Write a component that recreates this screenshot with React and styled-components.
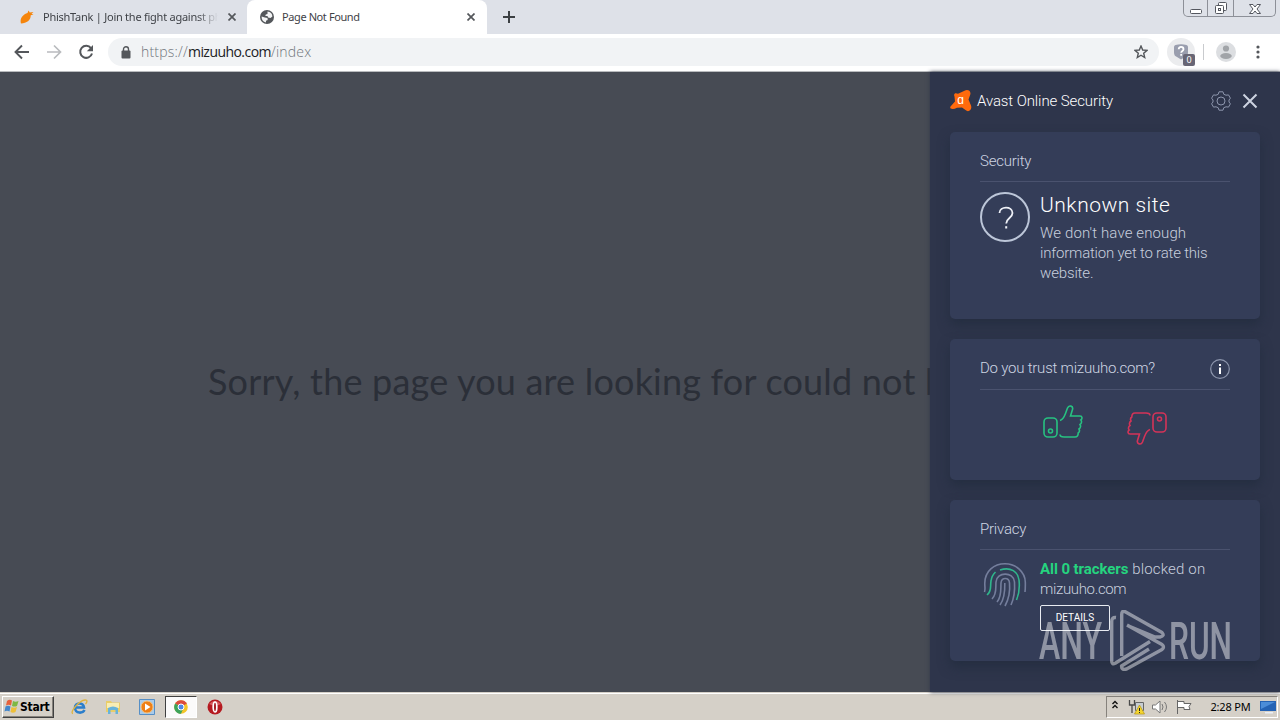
import React from "react";
import styled, { createGlobalStyle } from "styled-components";

const App = () => {
    return (
        <Desktop>
            <GlobalStyle />
            <TabStrip>
                <Tab>
                    <FishIcon />
                    <TabTitle $fade>PhishTank | Join the fight against phishing</TabTitle>
                    <CloseIcon />
                </Tab>
                <Tab $active>
                    <GlobeIcon />
                    <TabTitle>Page Not Found</TabTitle>
                    <CloseIcon />
                </Tab>
                <NewTab>
                    <svg width="12" height="12" viewBox="0 0 12 12">
                        <path d="M6 0v12M0 6h12" stroke="#3c4043" strokeWidth="2" />
                    </svg>
                </NewTab>
                <WindowButtons>
                    <WindowButton $width={23}>
                        <svg width="23" height="16" viewBox="0 0 23 16">
                            <rect x="6.500" y="8.500" width="11" height="4" rx="1" fill="#fff" stroke="#54575f" />
                        </svg>
                    </WindowButton>
                    <WindowButton $width={25}>
                        <svg width="25" height="16" viewBox="0 0 25 16">
                            <rect x="10.500" y="1.500" width="8" height="8" rx="1" fill="#fff" stroke="#54575f" />
                            <rect x="7.500" y="4.500" width="8" height="8" rx="1" fill="#fff" stroke="#54575f" />
                            <rect x="10.500" y="7.500" width="2" height="2" fill="#fff" stroke="#54575f" />
                        </svg>
                    </WindowButton>
                    <WindowButton $width={41}>
                        <svg width="41" height="16" viewBox="0 0 41 16">
                            <path d="M15.500 3.500h3.500l2 2.500 2-2.500h3.500l-3.500 4.500 3.500 4.500H23l-2-2.500-2 2.500h-3.500L19 8z" fill="#fff" stroke="#54575f" />
                        </svg>
                    </WindowButton>
                </WindowButtons>
            </TabStrip>
            <Toolbar>
                <NavIcons>
                    <svg width="16" height="16" viewBox="0 0 16 16">
                        <path d="M15 8H2M8 1.500L1.500 8 8 14.500" fill="none" stroke="#54575b" strokeWidth="1.900" />
                    </svg>
                    <svg width="16" height="16" viewBox="0 0 16 16">
                        <path d="M1 8h13M8 1.500L14.500 8 8 14.500" fill="none" stroke="#b9bbbe" strokeWidth="1.700" />
                    </svg>
                    <svg width="16" height="16" viewBox="0 0 16 16">
                        <path d="M13 4.200A6 6 0 1 0 14 9.500" fill="none" stroke="#54575b" strokeWidth="2" />
                        <path d="M15 1v6.200H8.800z" fill="#54575b" />
                    </svg>
                </NavIcons>
                <AddressBar>
                    <svg width="10" height="13" viewBox="0 0 10 13">
                        <path d="M2.500 6V3.200a2.500 2.500 0 0 1 5 0V6" fill="none" stroke="#54575b" strokeWidth="1.400" />
                        <rect x="0.500" y="4.500" width="9" height="8" rx="1" fill="#54575b" />
                    </svg>
                    <Url>
                        https://<strong>mizuuho.com</strong>/index
                    </Url>
                    <svg width="14" height="14" viewBox="0 0 14 14">
                        <path d="M7 1l1.700 4 4.300.4-3.300 2.800 1 4.300L7 10.200l-3.700 2.300 1-4.300L1 5.400 5.300 5z" fill="none" stroke="#54575b" strokeWidth="1.400" />
                    </svg>
                </AddressBar>
                <ExtensionButton>
                    <svg width="14" height="16" viewBox="0 0 14 16">
                        <path d="M1.500 1Q7-.3 12.500 1q1.500.3 1.500 2v5.500q0 3.500-3 4.500L7 15.500 3 13Q0 12 0 8.500V3q0-1.700 1.500-2z" fill="#9a9eae" />
                        <path d="M4.700 5.300c0-3.300 4.800-3 4.800 0C9.500 7 7.200 7 7.200 8.800M7.200 10v1.800" fill="none" stroke="#fff" strokeWidth="1.800" />
                    </svg>
                    <ExtensionBadge>0</ExtensionBadge>
                </ExtensionButton>
                <ToolbarDivider />
                <Avatar>
                    <svg width="20" height="20" viewBox="0 0 20 20">
                        <circle cx="10" cy="10" r="10" fill="#dcdee1" />
                        <circle cx="10" cy="6.500" r="3.100" fill="#a1a4a8" />
                        <ellipse cx="10" cy="14" rx="5.800" ry="2.900" fill="#a1a4a8" />
                    </svg>
                </Avatar>
                <svg width="4" height="14" viewBox="0 0 4 14" fill="#54575b">
                    <circle cx="2" cy="2" r="1.600" />
                    <circle cx="2" cy="7" r="1.600" />
                    <circle cx="2" cy="12" r="1.600" />
                </svg>
            </Toolbar>
            <Main>
                <PageBody>
                    <NotFound>Sorry, the page you are looking for could not be found.</NotFound>
                </PageBody>
                <Panel>
                    <PanelHeader>
                        <AvastLogo />
                        <PanelTitle>Avast Online Security</PanelTitle>
                        <GearIcon />
                        <svg width="16" height="16" viewBox="0 0 16 16">
                            <path d="M1.500 1.500l13 13M14.500 1.500l-13 13" stroke="#cdd3e0" strokeWidth="2" />
                        </svg>
                    </PanelHeader>
                    <Card $height={187}>
                        <CardTitle>
                            <CardLabel>Security</CardLabel>
                        </CardTitle>
                        <CardRow $top={10}>
                            <svg width="50" height="50" viewBox="0 0 50 50" fill="none">
                                <circle cx="25" cy="25" r="24" stroke="#bcc6d8" strokeWidth="2" />
                                <path d="M19.500 21c0-7 13-7.500 13 0 0 5-6.300 5-6.300 10.500" stroke="#eef1f7" strokeWidth="1.800" />
                                <path d="M25.200 34.200h2v2.300h-2z" fill="#eef1f7" />
                            </svg>
                            <div>
                                <SiteStatus>Unknown site</SiteStatus>
                                <Text $spacing="0.12px">We don't have enough</Text>
                                <Text $spacing="-0.2px">information yet to rate this</Text>
                                <Text $spacing="-0.15px">website.</Text>
                            </div>
                        </CardRow>
                    </Card>
                    <Card $height={141}>
                        <CardTitle $height={50}>
                            <CardLabel>Do you trust mizuuho.com?</CardLabel>
                            <svg width="20" height="20" viewBox="0 0 20 20">
                                <circle cx="10" cy="10" r="9.300" fill="none" stroke="#8d96ad" strokeWidth="1.200" />
                                <path d="M9 5h2v2H9zM9 8.500h2V15H9z" fill="#fff" />
                            </svg>
                        </CardTitle>
                        <VoteRow>
                            <ThumbIcon color="#27c281" />
                            <FlippedThumb color="#d43358" />
                        </VoteRow>
                    </Card>
                    <Card $height={161}>
                        <CardTitle>
                            <CardLabel>Privacy</CardLabel>
                        </CardTitle>
                        <CardRow $top={9}>
                            <FingerprintIcon />
                            <div>
                                <Text $spacing="0.18px">
                                    <strong>All 0 trackers</strong> blocked on
                                </Text>
                                <Text $spacing="-0.35px">mizuuho.com</Text>
                                <DetailsButton>DETAILS</DetailsButton>
                            </div>
                        </CardRow>
                    </Card>
                </Panel>
                <Watermark />
            </Main>
            <Taskbar>
                <StartButton>
                    <WindowsFlag />
                    Start
                </StartButton>
                <Launchers>
                    <Launcher><ExplorerIcon /></Launcher>
                    <Launcher><FolderIcon /></Launcher>
                    <Launcher><PlayerIcon /></Launcher>
                    <Launcher $active><ChromeIcon /></Launcher>
                    <Launcher><OperaIcon /></Launcher>
                </Launchers>
                <Tray>
                    <TrayIcons />
                    <Clock>2:28 PM</Clock>
                    <svg width="16" height="14" viewBox="0 0 16 14">
                        <path d="M0 1h16v10H0z" fill="#2563b4" />
                        <path d="M1 2h14L1 9z" fill="#4c8dd8" />
                        <path d="M5 12h8v1.500H5z" fill="#e8eef7" />
                    </svg>
                </Tray>
            </Taskbar>
        </Desktop>
    );
};

export default App;

const FishIcon = () => (
    <svg width="14" height="14" viewBox="0 0 14 14">
        <path d="M1 13.500C-.5 9 2.500 4.500 7.500 3L8.500.5l1.300 2L13.500 2l-2 1.700 2 .8-2.800.8C11 9.500 7 13.500 1 13.500z" fill="#f5850c" />
    </svg>
);

const GlobeIcon = () => (
    <svg width="14" height="14" viewBox="0 0 14 14">
        <circle cx="7" cy="7" r="7" fill="#54575b" />
        <path d="M7.500 1.600C10.500 1.800 12.300 4 12.400 6.500L10.500 8 8 7.500 7.500 6H5.300l.5-1.500L7.500 4zM1.600 6.500l3.200 1L7.500 8l.2 2-1.700.8v1.600C3 12 1.500 9.500 1.600 6.500z" fill="#f3f4f5" />
    </svg>
);

const CloseIcon = () => (
    <svg width="8" height="8" viewBox="0 0 8 8">
        <path d="M.5.5l7 7M7.500.5l-7 7" stroke="#54575b" strokeWidth="1.700" />
    </svg>
);

const AvastLogo = () => (
    <svg width="22" height="22" viewBox="0 0 22 22">
        <path d="M4.500 6.500C3.200 3.500 5.500 2.600 8 3.800L14.500.8C17.500-1 21.300.8 20.300 4.500L18.500 9.500l2.500 6c1.500 4-2.500 7.500-5.500 4.500L12 17.500l-5 .2c-3.500 2-8 1.500-6.500-1.200L5 11.500z" fill="#ff6a0d" />
        <text x="10.700" y="14" textAnchor="middle" fill="#fff" fontFamily="Roboto, sans-serif" fontSize="12">ɑ</text>
    </svg>
);

const GearIcon = () => (
    <svg width="20" height="20" viewBox="0 0 20 20" fill="none" stroke="#8d96ad" strokeWidth="1">
        <circle cx="10" cy="10" r="4" />
        <path d="M8 .8h4l.8 2.500L15 4.200l2.500-.3 1.900 3.300L18 9v2l1.400 1.800-1.900 3.300-2.500-.3-2.200.9-.8 2.500H8l-.8-2.500-2.200-.9-2.500.3-1.900-3.300L2 11V9L.6 7.200l1.900-3.300 2.500.3 2.200-.9z" strokeLinejoin="round" />
    </svg>
);

const ThumbIcon = ({ className, color }) => (
    <svg className={className} width="40" height="34" viewBox="0 0 40 34" fill="none" stroke={color} strokeWidth="1.600">
        <rect x="1" y="13" width="13" height="19" rx="4" />
        <circle cx="7.500" cy="26" r="2" />
        <path d="M17 15.500c3-1 4-3 5.500-7l2-5.500c1.500-3.500 6-2 5 1.500L27.500 11H37c2.500 0 2.500 3 .8 4 1.200 1 .9 3.500-.8 4.500 1 1.500.6 3.500-1 4.500.8 1.500.5 3-.8 4 0 2.500-1 4-3.200 4H21c-2.500 0-4-.5-4-2.500" />
    </svg>
);

const FingerprintIcon = () => (
    <svg width="50" height="50" viewBox="0 0 50 50" fill="none" stroke="#747e9c" strokeWidth="1.600">
        <path d="M4.500 33c1-3 .2-5 .3-9C5 12 14 4.800 25 4.800S45 13 45.300 23c.1 4 0 7-.3 10" />
        <path d="M7 36c5-4 3-8 4-14 .5-3.500 1.700-6.500 4.500-9M20 11c11-3.500 18 2 19 10 .8 7 0 14-2.500 20" stroke="#30b68c" />
        <path d="M12 40c5-5 3.500-11 4-17 .5-10 17.500-11 18.500 0 .5 8-.3 16-3.500 23" />
        <path d="M17 43c5-6 3.500-13 4-19 .5-6 8-6 8.500 0 .7 8-.6 16-4.500 23" />
        <path d="M20 46c4.500-6 5-13 4.800-22" />
    </svg>
);

const Watermark = () => (
    <WatermarkSvg width="194" height="62" viewBox="0 0 194 62">
        <g fill="#fff" fontFamily="Roboto, 'Liberation Sans', sans-serif" fontSize="51" fontWeight="500">
            <text x="0" y="49" textLength="63" lengthAdjust="spacingAndGlyphs">ANY</text>
            <text x="130" y="49" textLength="63" lengthAdjust="spacingAndGlyphs">RUN</text>
        </g>
        <path d="M77 7.500q-4.300-.5-4.300 4V51q0 4 3.500 2.300L111 31.500M82.700 46V4.500q0-4.500 3.500-2.800L123 22.500q3 3.500-2 4.500h-5L88.500 15.500M88 15l35 19.500q3 2.500 0 5L87.500 59q-5 1.500-5-3L110 39" fill="none" stroke="#fff" strokeWidth="3.400" strokeLinejoin="round" />
    </WatermarkSvg>
);

const WindowsFlag = () => (
    <svg width="15" height="15" viewBox="0 0 15 15">
        <path d="M3 2q2.500-2 5-.5L7 6.500Q4.500 5 2 6.500z" fill="#e6613c" />
        <path d="M9 2q2.500 1.500 5.500 0L13 7q-2.500 1-5 0z" fill="#7eb844" />
        <path d="M1.500 7.500q2.500-1.500 5 0l-1 5q-2.500-1.500-5 0z" fill="#4386cb" />
        <path d="M7.500 8q2.500 1.500 5.500 0l-1.500 5q-2.500 1.500-5 0z" fill="#eebf39" />
    </svg>
);

const ExplorerIcon = () => (
    <svg width="17" height="16" viewBox="0 0 17 16" fill="none">
        <path d="M13.500 11c-1.800 3.500-9 4-9.500-2S12.500 3 13 8.500H5" stroke="#2b7ecb" strokeWidth="2.600" />
        <path d="M2 14.500C-2 14 8 1.500 14 1c3-.2 2 2.500.5 4" stroke="#dfb33f" strokeWidth="1.300" />
    </svg>
);

const FolderIcon = () => (
    <svg width="16" height="16" viewBox="0 0 16 16">
        <path d="M1 2h5l1 1.500h8V13H1z" fill="#e9cd69" />
        <path d="M2 4h12v5H2z" fill="#f8edb4" />
        <path d="M3 15V9q5-3 10 0v6h-2.500v-4h-5v4z" fill="#68b3da" />
    </svg>
);

const PlayerIcon = () => (
    <svg width="16" height="16" viewBox="0 0 16 16">
        <path d="M.5.5h15v15H.5z" fill="#a9cbea" stroke="#568fc6" />
        <circle cx="8" cy="8" r="6" fill="#ee7f16" stroke="#f7c078" />
        <path d="M6 4.500L11.500 8 6 11.500z" fill="#fff" />
    </svg>
);

const ChromeIcon = () => (
    <svg width="14" height="14" viewBox="0 0 14 14">
        <circle cx="7" cy="7" r="6.800" fill="#f4c529" />
        <path d="M7 7L1.100 3.600a6.800 6.800 0 0 1 11.800 0z" fill="#dc4b3e" />
        <path d="M7 7L1.100 3.600A6.800 6.800 0 0 0 7 13.800L9 9z" fill="#3da35a" />
        <circle cx="7" cy="7" r="3" fill="#4f88e6" stroke="#fff" />
    </svg>
);

const OperaIcon = () => (
    <svg width="16" height="16" viewBox="0 0 16 16">
        <circle cx="8" cy="8" r="7.500" fill="#b51a20" />
        <path d="M2 5q6-6 12 0-6 3-12 0z" fill="#d65a5d" />
        <ellipse cx="8" cy="8" rx="1.800" ry="5" fill="#a01218" stroke="#fff" strokeWidth="1.700" />
    </svg>
);

const TrayIcons = () => (
    <svg width="86" height="18" viewBox="0 0 86 18" fill="none">
        <path d="M1.500 6L4 3.500 6.500 6M1.500 10L4 7.500 6.500 10" stroke="#111" strokeWidth="1.400" />
        <path d="M18.500 2v5h5V2M21 7v8" stroke="#4a4a4a" strokeWidth="1.300" />
        <path d="M24.500 4.500h8v8h-8z" fill="#c7cdd3" stroke="#666" />
        <path d="M28.500 7l5 9h-10z" fill="#f4d52e" stroke="#b69514" strokeWidth=".7" />
        <path d="M28.500 10v3M28.500 14v1" stroke="#222" />
        <path d="M41.500 7h3L49 3v12l-4.500-4h-3z" fill="#fff" stroke="#777" />
        <path d="M51 6q2 3 0 6M53.500 4q4 5 0 10" stroke="#777" />
        <path d="M66.500 2v14M67 3.500h6v2h7l-2 3 1 3h-6v-2h-6" fill="#fff" stroke="#666" />
    </svg>
);

const GlobalStyle = createGlobalStyle`
  body {
    margin: 0;
    overflow: hidden;
  }
`;

const Desktop = styled.div`
  width: 1280px;
  height: 720px;
  display: flex;
  flex-direction: column;
  overflow: hidden;
  font-family: "Noto Sans", "Open Sans", sans-serif;
`;

const TabStrip = styled.div`
  height: 34px;
  display: flex;
  background-color: #dee1e8;
`;

const Tab = styled.div`
  box-sizing: border-box;
  width: ${(props) => (props.$active ? 240 : 247)}px;
  padding: 0 ${(props) => (props.$active ? "12px 0 13px" : "11px 0 20px")};
  display: flex;
  align-items: center;
  background-color: ${(props) => (props.$active ? "#fff" : "transparent")};
  border-radius: 8px 8px 0 0;
`;

const TabTitle = styled.div`
  flex: 1;
  margin: 0 10px 0 ${(props) => (props.$fade ? 9 : 8)}px;
  padding-bottom: 2px;
  overflow: hidden;
  white-space: nowrap;
  font-size: 11px;
  letter-spacing: ${(props) => (props.$fade ? "-0.25px" : "-0.4px")};
  color: #3f4247;
  mask-image: ${(props) => (props.$fade ? "linear-gradient(90deg, #000 88%, transparent)" : "none")};
`;

const NewTab = styled.div`
  width: 44px;
  display: flex;
  align-items: center;
  justify-content: center;
`;

const WindowButtons = styled.div`
  height: 16px;
  margin: 0 4px 0 auto;
  display: flex;
  border: 1px solid #8d9098;
  border-top: 0;
  border-radius: 0 0 5px 5px;
`;

const WindowButton = styled.div`
  width: ${(props) => props.$width}px;
  border-right: 1px solid #8d9098;
  &:last-child {
    border-right: 0;
  }
`;

const Toolbar = styled.div`
  box-sizing: border-box;
  height: 38px;
  padding: 0 20px 1px 14px;
  display: flex;
  align-items: center;
  background-color: #fff;
  border-bottom: 1px solid #b9bbbe;
`;

const NavIcons = styled.div`
  width: 94px;
  display: flex;
  gap: 16px;
`;

const AddressBar = styled.div`
  box-sizing: border-box;
  width: 1051px;
  height: 28px;
  padding: 0 11px 0 13px;
  display: flex;
  align-items: center;
  background-color: #f1f3f5;
  border-radius: 14px;
`;

const Url = styled.div`
  flex: 1;
  margin-left: 10px;
  padding-bottom: 2px;
  font-family: "Open Sans", sans-serif;
  font-size: 14px;
  font-weight: 300;
  letter-spacing: 0.2px;
  color: #70757b;
  strong {
    font-weight: 400;
    letter-spacing: -0.55px;
    color: #202124;
  }
`;

const ExtensionButton = styled.div`
  position: relative;
  width: 28px;
  height: 28px;
  margin-left: 8px;
  display: flex;
  align-items: center;
  justify-content: center;
  background-color: #ebecee;
  border-radius: 50%;
`;

const ExtensionBadge = styled.div`
  position: absolute;
  left: 16px;
  top: 16px;
  width: 12px;
  height: 12px;
  font-size: 9px;
  line-height: 12px;
  text-align: center;
  color: #fff;
  background-color: #686675;
  border-radius: 2px;
`;

const ToolbarDivider = styled.div`
  width: 1px;
  height: 16px;
  margin: 0 12px 0 8px;
  background-color: #c9cbce;
`;

const Avatar = styled.div`
  height: 20px;
  margin-right: 20px;
`;

const Main = styled.div`
  position: relative;
  height: 620px;
  display: flex;
  background-color: #474b54;
`;

const PageBody = styled.div`
  width: 930px;
  display: flex;
  align-items: center;
  overflow: hidden;
`;

const NotFound = styled.div`
  padding: 0 0 3px 208px;
  white-space: nowrap;
  font-family: Lato, sans-serif;
  font-size: 36px;
  letter-spacing: 0.2px;
  color: #2b2f38;
`;

const Panel = styled.div`
  box-sizing: border-box;
  width: 350px;
  padding: 0 20px;
  display: flex;
  flex-direction: column;
  gap: 20px;
  font-family: Roboto, sans-serif;
  background-color: #2e354b;
  box-shadow: 0 0 4px #30364a;
`;

const PanelHeader = styled.div`
  box-sizing: border-box;
  height: 40px;
  padding: 17px 2px 0 0;
  display: flex;
  align-items: center;
`;

const PanelTitle = styled.div`
  flex: 1;
  margin-left: 5px;
  font-size: 15px;
  font-weight: 300;
  letter-spacing: -0.1px;
  color: #fff;
  & + svg {
    margin-right: 11px;
  }
`;

const Card = styled.div`
  box-sizing: border-box;
  height: ${(props) => props.$height}px;
  padding: 0 30px;
  background-color: #343d58;
  border-radius: 5px;
  box-shadow: 0 6px 12px rgba(30, 42, 58, 0.6);
`;

const CardTitle = styled.div`
  height: ${(props) => props.$height || 49}px;
  display: flex;
  align-items: center;
  justify-content: space-between;
  border-bottom: 1px solid #4a526e;
  svg {
    margin-top: 10px;
  }
`;

const CardLabel = styled.div`
  padding-top: 8px;
  font-size: 15px;
  font-weight: 300;
  letter-spacing: -0.22px;
  color: #ced5e3;
`;

const CardRow = styled.div`
  padding-top: ${(props) => props.$top}px;
  display: flex;
  gap: 10px;
`;

const SiteStatus = styled.div`
  height: 31px;
  font-size: 21px;
  font-weight: 300;
  line-height: 26px;
  letter-spacing: 0.5px;
  color: #fff;
`;

const Text = styled.div`
  white-space: nowrap;
  font-size: 15px;
  font-weight: 300;
  line-height: 20px;
  letter-spacing: ${(props) => props.$spacing || "0"};
  color: #c8cfde;
  strong {
    font-weight: 700;
    letter-spacing: -0.08px;
    color: #25d47f;
  }
`;

const VoteRow = styled.div`
  padding-top: 15px;
  display: flex;
  justify-content: center;
  gap: 44px;
`;

const FlippedThumb = styled(ThumbIcon)`
  margin-top: 6px;
  transform: rotate(180deg);
`;

const DetailsButton = styled.div`
  box-sizing: border-box;
  width: 70px;
  height: 26px;
  margin-top: 6px;
  font-size: 10px;
  line-height: 24px;
  text-align: center;
  color: #fff;
  border: 1px solid #e8ebf1;
  border-radius: 2px;
`;

/* stamped over the panel, half transparent */
const WatermarkSvg = styled.svg`
  position: absolute;
  left: 1039px;
  top: 538px;
  opacity: 0.45;
`;

const Taskbar = styled.div`
  box-sizing: border-box;
  height: 28px;
  padding: 0 2px;
  display: flex;
  align-items: center;
  background-color: #d5d0c8;
  border-top: 1px solid #d5d0c8;
  box-shadow: inset 0 1px #fff;
`;

const StartButton = styled.div`
  box-sizing: border-box;
  width: 52px;
  height: 22px;
  padding-left: 1px;
  display: flex;
  align-items: center;
  gap: 1px;
  font-family: "DejaVu Sans Condensed", "DejaVu Sans", sans-serif;
  font-size: 12px;
  font-weight: 700;
  letter-spacing: -0.25px;
  color: #000;
  border: 1px solid;
  border-color: #fff #404040 #404040 #fff;
  box-shadow: inset -1px -1px #86827c;
`;

const Launchers = styled.div`
  flex: 1;
  margin-left: 9px;
  display: flex;
  gap: 2px;
`;

const Launcher = styled.div`
  box-sizing: border-box;
  width: 32px;
  height: 22px;
  display: flex;
  align-items: center;
  justify-content: center;
  border: 1px solid;
  border-color: ${(props) => (props.$active ? "#404040 #fff #fff #404040" : "transparent")};
  background-color: ${(props) => (props.$active ? "#fbfafa" : "transparent")};
`;

const Tray = styled.div`
  box-sizing: border-box;
  width: 172px;
  height: 22px;
  padding: 0 1px 0 4px;
  display: flex;
  align-items: center;
  justify-content: space-between;
  border: 1px solid;
  border-color: #86827c #fff #fff #86827c;
`;

const Clock = styled.div`
  margin-left: 4px;
  font-size: 11px;
  letter-spacing: -0.2px;
  color: #000;
`;
